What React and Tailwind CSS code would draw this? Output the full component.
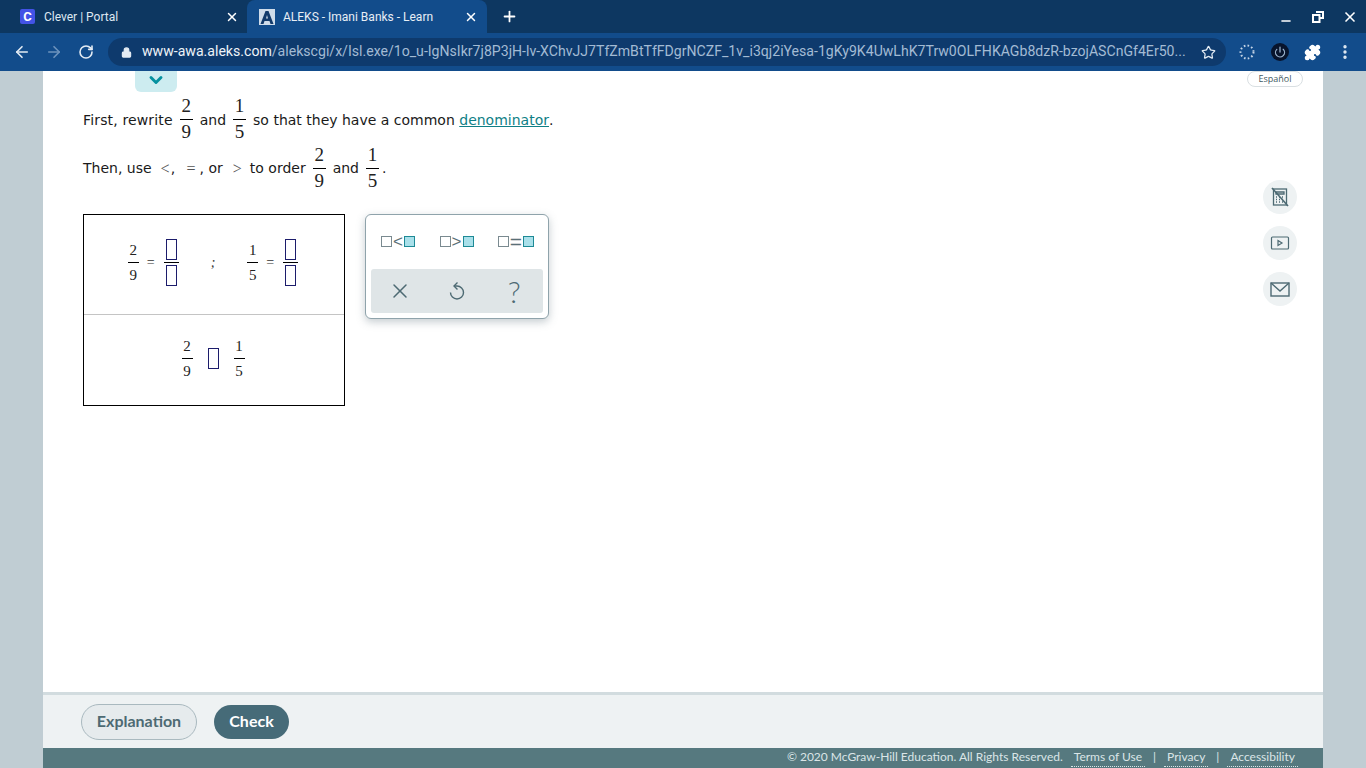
import { ArrowLeft, ArrowRight, RotateCw, Lock, Star, X, Plus, Minus, EllipsisVertical, Puzzle, Power, ChevronDown } from 'lucide-react';

const Frac = ({ n, d, size = 'big' }) => (
  size === 'big' ? (
    <span className="inline-flex flex-col items-center w-[13px] font-['Liberation_Serif',serif] text-[19px] leading-[22px] text-[#222]">
      <span className="h-[24px]">{n}</span>
      <span className="w-[13px] h-px bg-black" />
      <span className="h-[24px] pt-[1px]">{d}</span>
    </span>
  ) : (
    <span className="inline-flex flex-col items-center w-[11px] font-['Liberation_Serif',serif] text-[15px] leading-[16px] text-[#222]">
      <span className="h-[24px] flex items-end pb-[4px]">{n}</span>
      <span className="w-[11px] h-px bg-black" />
      <span className="h-[24px] flex items-start pt-[4px]">{d}</span>
    </span>
  )
);

const Blank = () => <span className="block w-[11px] h-[21px] border border-[#1c1c6b]" />;

const BlankFrac = () => (
  <span className="inline-flex flex-col items-center w-[15px]">
    <Blank />
    <span className="w-[15px] h-px bg-black my-[2px]" />
    <Blank />
  </span>
);

const Sym = ({ op, wide }) => (
  <span className="flex items-center justify-center">
    <span className="block w-[11px] h-[11px] border-[1.5px] border-[#7a8a90] bg-white" />
    {wide ? (
      <span className="w-[14px] text-center font-['Liberation_Sans',sans-serif] text-[21px] leading-[11px] text-[#5a6f77]">{op}</span>
    ) : (
      <span className="w-[12px] text-center font-['Liberation_Sans',sans-serif] text-[17px] leading-[11px] text-[#5a6f77]">{op}</span>
    )}
    <span className="block w-[11px] h-[11px] border-[1.5px] border-[#1e8a96] bg-[#a9e0ea]" />
  </span>
);

const ToolBtn = ({ children }) => (
  <span className="w-[34px] h-[34px] rounded-full bg-[#eef2f3] flex items-center justify-center text-[#4d6a73]">
    {children}
  </span>
);

export default function App() {
  return (
    <div className="w-[1366px] h-[768px] overflow-hidden flex flex-col font-['Roboto',sans-serif] bg-[#c0cdd3]">
      {/* tab strip */}
      <div className="h-[33px] bg-[#0d3761] flex items-end pl-[8px] text-white shrink-0">
        <div className="w-[239px] h-[33px] flex items-center pl-[12px] pr-[8px]">
          <span className="w-[15px] h-[15px] rounded-[2px] bg-[#4353e6] text-white text-[13px] font-bold flex items-center justify-center">C</span>
          <span className="ml-[9px] text-[12px] text-[#dfe8f1] flex-1">Clever | Portal</span>
          <X size={14} strokeWidth={2.5} />
        </div>
        <div className="w-[240px] h-[33px] rounded-t-[8px] bg-[#124c8b] flex items-center pl-[12px] pr-[9px]">
          <span className="w-[16px] h-[16px] bg-[#cfdcea] flex items-center justify-center">
            <svg width="14" height="14" viewBox="0 0 14 14"><path d="M5.5 1h3L13.5 14h-3l-1-3h-5l-1 3h-3z M6 8.5h2L7 5z" fill="#123a6b" fillRule="evenodd" /></svg>
          </span>
          <span className="ml-[8px] text-[12px] text-[#e8eef5] flex-1">ALEKS - Imani Banks - Learn</span>
          <X size={14} strokeWidth={2.5} />
        </div>
        <div className="w-[44px] h-[33px] flex items-center justify-center">
          <Plus size={17} strokeWidth={2.5} />
        </div>
        <div className="flex-1" />
        <div className="h-[33px] flex items-center">
          <span className="w-[32px] flex justify-center"><Minus size={14} strokeWidth={2.5} className="mt-[8px]" /></span>
          <span className="w-[32px] flex justify-center">
            <svg width="12" height="12" viewBox="0 0 12 12" fill="none" stroke="white" strokeWidth="2"><path d="M4 1h7v6H8" /><rect x="1" y="4" width="6.5" height="7" /></svg>
          </span>
          <span className="w-[32px] flex justify-center"><X size={16} strokeWidth={2.5} /></span>
        </div>
      </div>

      {/* address bar */}
      <div className="h-[38px] bg-[#124c8b] flex items-center text-[#e4ecf4] shrink-0">
        <span className="w-[44px] flex justify-center"><ArrowLeft size={18} strokeWidth={2.2} /></span>
        <span className="w-[20px] flex justify-center text-[#6d93bd]"><ArrowRight size={18} strokeWidth={2.2} /></span>
        <span className="w-[44px] flex justify-center"><RotateCw size={16} strokeWidth={2.4} /></span>
        <div className="w-[1118px] h-[28px] rounded-full bg-[#0e3a6d] flex items-center pl-[13px] pr-[10px]">
          <Lock size={11} strokeWidth={2.5} className="fill-[#e4ecf4]" />
          <span className="ml-[10px] text-[14.1px] whitespace-nowrap overflow-hidden flex-1">
            <span className="text-[#eef3f8]">www-awa.aleks.com</span>
            <span className="text-[#a3bbd4]">/alekscgi/x/Isl.exe/1o_u-IgNsIkr7j8P3jH-lv-XChvJJ7TfZmBtTfFDgrNCZF_1v_i3qj2iYesa-1gKy9K4UwLhK7Trw0OLFHKAGb8dzR-bzojASCnGf4Er50...</span>
          </span>
          <Star size={15} strokeWidth={2} className="ml-[12px]" />
        </div>
        <span className="w-[42px] flex justify-center">
          <svg width="16" height="16" viewBox="0 0 16 16" fill="none" stroke="#c4d4e6" strokeWidth="2" strokeDasharray="1.6 2.2"><circle cx="8" cy="8" r="6.5" /></svg>
        </span>
        <span className="w-[24px] h-[24px] flex justify-center items-center">
          <span className="w-[18px] h-[18px] rounded-full bg-[#08142c] flex items-center justify-center text-[#9db5cf]"><Power size={12} strokeWidth={2.5} /></span>
        </span>
        <span className="w-[40px] flex justify-center"><Puzzle size={17} className="fill-white text-white" /></span>
        <span className="w-[26px] flex justify-center"><EllipsisVertical size={18} strokeWidth={2.5} /></span>
      </div>

      {/* page */}
      <div className="flex-1 min-h-0 flex flex-col w-[1280px] ml-[43px] bg-white">
        <div className="flex-1 min-h-0 flex">
          <div className="w-[1204px] pl-[40px]">
            <div className="ml-[52px] w-[42px] h-[21px] bg-[#cdecf0] rounded-b-[6px] flex justify-center text-[#05919f]">
              <ChevronDown size={20} strokeWidth={3.5} className="-mt-[1px]" />
            </div>

            <div className="font-['DejaVu_Sans',sans-serif] text-[14px] text-[#1a1a1a]">
              <div className="flex items-center h-[49px] mt-[3px]">
                <span className="mt-[2px] tracking-[0.15px]">First, rewrite</span>
                <span className="mx-[7px] flex"><Frac n="2" d="9" /></span>
                <span className="mt-[2px]">and</span>
                <span className="mx-[7px] flex"><Frac n="1" d="5" /></span>
                <span className="mt-[2px]">so that they have a common&nbsp;</span>
                <span className="mt-[2px] text-[#0f7f86] underline">denominator</span>
                <span className="mt-[2px]">.</span>
              </div>
              <div className="flex items-center h-[49px]">
                <span>Then, use</span>
                <span className="ml-[9px] mr-[1px] text-[#555] font-['Liberation_Serif',serif] text-[16px]">&lt;</span>
                <span>,&nbsp;</span>
                <span className="ml-[7px] mr-[4px] text-[#555] font-['Liberation_Serif',serif] text-[16px]">=</span>
                <span>, or</span>
                <span className="ml-[10px] mr-[8px] text-[#555] font-['Liberation_Serif',serif] text-[16px]">&gt;</span>
                <span>to order</span>
                <span className="mx-[7px] flex"><Frac n="2" d="9" /></span>
                <span>and</span>
                <span className="mx-[7px] flex"><Frac n="1" d="5" /></span>
                <span className="-ml-[4px]">.</span>
              </div>
            </div>

            <div className="flex items-start mt-[21px]">
              {/* answer box */}
              <div className="w-[262px] h-[192px] border border-black flex flex-col">
                <div className="h-[100px] border-b border-[#c4c4c4] flex items-center justify-center pr-[2px] pb-[4px] font-['Liberation_Serif',serif] text-[14px] text-[#333]">
                  <Frac n="2" d="9" size="small" />
                  <span className="ml-[8px] mr-[9px]">=</span>
                  <BlankFrac />
                  <span className="mx-[32px] italic">;</span>
                  <Frac n="1" d="5" size="small" />
                  <span className="ml-[8px] mr-[9px]">=</span>
                  <BlankFrac />
                </div>
                <div className="flex-1 flex items-center justify-center pr-[2px] pb-[3px]">
                  <Frac n="2" d="9" size="small" />
                  <span className="mx-[15px]"><Blank /></span>
                  <Frac n="1" d="5" size="small" />
                </div>
              </div>

              {/* symbol palette */}
              <div className="ml-[20px] w-[184px] h-[105px] rounded-[6px] border border-[#8fa3ab] bg-white shadow-[0_3px_8px_rgba(90,110,120,0.35)] p-[5px] flex flex-col">
                <div className="flex-1 flex items-center justify-between pl-[10px] pr-[9px] pb-[7px]">
                  <Sym op="<" />
                  <Sym op=">" />
                  <Sym op="=" wide />
                </div>
                <div className="h-[44px] rounded-[3px] bg-[#dfe5e7] grid grid-cols-3 text-[#4d6a73]">
                  <span className="flex items-center justify-center"><X size={24} strokeWidth={1.5} /></span>
                  <span className="flex items-center justify-center">
                    <svg width="16" height="20" viewBox="0 0 16 20" fill="none" stroke="currentColor" strokeWidth="1.4">
                      <path d="M8.5 1.5L5 5l3.5 3.5" />
                      <path d="M5 5h3a6.5 6.5 0 1 1-6.5 6.5" />
                    </svg>
                  </span>
                  <span className="flex items-center justify-center text-[30px] font-['Lato',sans-serif] font-light leading-none">?</span>
                </div>
              </div>
            </div>
          </div>

          {/* right rail */}
          <div className="flex-1 flex flex-col items-start">
            <span className="w-[56px] h-[16px] border border-[#d9dfe2] rounded-full flex items-center justify-center font-['Open_Sans',sans-serif] text-[9px] text-[#3f5962]">Español</span>
            <div className="mt-[93px] flex flex-col gap-[12px] ml-[16px]">
              <ToolBtn>
                <svg width="20" height="20" viewBox="0 0 20 20" fill="none" stroke="currentColor" strokeWidth="1.3">
                  <rect x="3.5" y="2" width="13" height="16" />
                  <path d="M6 5h8v2H6z" />
                  <path d="M6 10h1M9 10h1M12 10h1M6 12.5h1M9 12.5h1M12 12.5h1M6 15h1M9 15h1M12 15h1" />
                  <path d="M2 1l16 18" strokeWidth="1.6" />
                </svg>
              </ToolBtn>
              <ToolBtn>
                <svg width="20" height="20" viewBox="0 0 20 20" fill="none" stroke="currentColor" strokeWidth="1.2">
                  <rect x="1.5" y="4" width="17" height="12" rx="1" />
                  <path d="M8 7.5l4 2.5-4 2.5z" />
                </svg>
              </ToolBtn>
              <ToolBtn>
                <svg width="20" height="20" viewBox="0 0 20 20" fill="none" stroke="currentColor" strokeWidth="1.4">
                  <rect x="1" y="4" width="18" height="13" />
                  <path d="M1 4l9 8 9-8" />
                </svg>
              </ToolBtn>
            </div>
          </div>
        </div>

        {/* action bar */}
        <div className="h-[56px] shrink-0 border-t-[3px] border-[#d2dcdf] bg-[#eef2f3] flex items-center pl-[38px] font-['Lato',sans-serif] text-[16px] font-bold">
          <span className="w-[116px] h-[36px] pb-[2px] rounded-full border border-[#a9b9bf] bg-[#e6ebed] text-[#4d6a73] flex items-center justify-center">Explanation</span>
          <span className="ml-[17px] w-[75px] h-[34px] pb-[2px] rounded-full bg-[#466b78] text-white flex items-center justify-center">Check</span>
        </div>

        {/* footer */}
        <div className="h-[20px] shrink-0 bg-[#56797f] flex items-center justify-end pr-[25px] pb-[2px] font-['Lato',sans-serif] text-[12px] text-[#dbe5e7]">
          <span>© 2020 McGraw-Hill Education. All Rights Reserved.</span>
          <span className="ml-[8px] px-[3px] border-b border-dotted border-[#dbe5e7]">Terms of Use</span>
          <span className="mx-[8px]">|</span>
          <span className="px-[3px] border-b border-dotted border-[#dbe5e7]">Privacy</span>
          <span className="mx-[8px]">|</span>
          <span className="px-[3px] border-b border-dotted border-[#dbe5e7]">Accessibility</span>
        </div>
      </div>
    </div>
  );
}
